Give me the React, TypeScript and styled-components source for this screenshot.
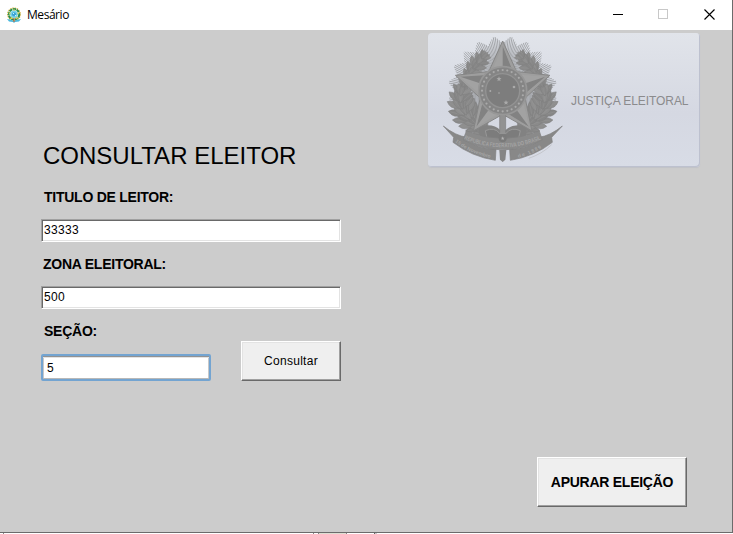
import React from "react";
import styled, { createGlobalStyle, css } from "styled-components";

const GlobalStyle = createGlobalStyle`
  * { box-sizing: border-box; }
  html, body { margin: 0; padding: 0; background: #fff; overflow: hidden; }
  body, input, button { font-family: "Liberation Sans", Arial, sans-serif; color: #000; }
`;

const Desktop = styled.div`
  width: 733px;
  height: 534px;
  background: #fff;
`;

const Window = styled.main`
  width: 733px;
  height: 533px;
  display: flex;
  flex-direction: column;
  border-right: 1px solid #6b6b6b;
  border-bottom: 1px solid #6b6b6b;
  background: #ccc;
`;

const TitleBar = styled.header`
  height: 30px;
  flex: none;
  display: flex;
  align-items: center;
  padding: 0 1px 0 6px;
  background: #fff;
`;

const WindowTitle = styled.h1`
  margin: 0 auto 0 5px;
  font: 400 12px/16px "Open Sans", "Noto Sans", sans-serif;
  letter-spacing: -0.45px;
`;

const WindowControl = styled.button<{ $disabled?: boolean }>`
  width: 45px;
  height: 30px;
  padding: 0 0 2px;
  border: 0;
  background: none;
  display: flex;
  align-items: center;
  justify-content: center;
  color: ${(p) => (p.$disabled ? "#c8c8c8" : "#000")};

  &:last-child { padding-left: 2px; }
`;

const Content = styled.div`
  flex: 1;
  display: flex;
  justify-content: space-between;
`;

const Form = styled.form`
  width: 341px;
  padding: 112px 0 0 41px;
  display: flex;
  flex-direction: column;
`;

const Heading = styled.h2`
  margin: 0 0 18px 2px;
  font-size: 24px;
  line-height: 28px;
  font-weight: 400;
  white-space: nowrap;
`;

const Label = styled.label<{ $indent: number }>`
  display: block;
  height: 18px;
  margin: 0 0 13px ${(p) => p.$indent}px;
  font-size: 14px;
  line-height: 18px;
  font-weight: 700;
  letter-spacing: -0.25px;
  white-space: nowrap;
`;

const Field = styled.input<{ $focused?: boolean }>`
  display: block;
  width: 300px;
  height: 23px;
  margin: 0 0 13px;
  padding: 0 2px 1px;
  border: 1px solid;
  border-color: #a0a0a0 #fff #fff #a0a0a0;
  outline: none;
  border-radius: 0;
  font-size: 12px;
  letter-spacing: 0.3px;
  background: #fff;
  box-shadow: inset 1px 1px 0 #696969, inset -1px -1px 0 #e3e3e3;
  ${(p) =>
    p.$focused &&
    css`
      width: 170px;
      height: 27px;
      margin: 0;
      padding: 0 4px;
      border: 2px solid #73a4d1;
      border-radius: 2px;
      box-shadow: inset 0 1px 0 #929292, inset 0 2px 0 #e3e3e3, inset 0 -1px 0 #b8b8b8,
        inset -1px 0 0 #c8c8c8, inset 1px 0 0 #c8c8c8;
    `}
`;

const SectionRow = styled.div`
  display: flex;
  justify-content: space-between;
  align-items: flex-end;
  height: 40px;
  margin-top: -12px;
`;

const RaisedButton = styled.button<{ $large?: boolean }>`
  width: ${(p) => (p.$large ? 150 : 100)}px;
  height: ${(p) => (p.$large ? 50 : 40)}px;
  padding: 0;
  border: 1px solid;
  border-color: #fff #696969 #696969 #fff;
  border-radius: 0;
  background: #efefef;
  box-shadow: inset -1px -1px 0 #a0a0a0, inset 1px 1px 0 #e3e3e3;
  font-size: ${(p) => (p.$large ? 14 : 12)}px;
  font-weight: ${(p) => (p.$large ? 700 : 400)};
  letter-spacing: ${(p) => (p.$large ? -0.26 : 0.3)}px;
  white-space: nowrap;
`;

const SideColumn = styled.aside`
  width: 305px;
  padding: 3px 33px 25px 0;
  display: flex;
  flex-direction: column;
  align-items: flex-end;
  justify-content: space-between;
`;

const JusticeCard = styled.section`
  width: 272px;
  height: 134px;
  margin-right: -1px;
  display: flex;
  align-items: center;
  padding-left: 13px;
  border-radius: 4px;
  background: linear-gradient(#e1e4ea, #d5d8e2 60%, #d8dce6);
  box-shadow: inset -1px -1px 0 #bdc1cf, 0 1px 1px #c0c2c8;
`;

const CardCaption = styled.span`
  margin: 2px 0 0 6px;
  color: #8b8b8d;
  font-size: 12px;
  line-height: 14px;
  letter-spacing: -0.06px;
  white-space: nowrap;
`;

const ActionSlot = styled.div`
  margin-right: 12px;
`;

const UnderWindow = styled.div`
  height: 1px;
  background: linear-gradient(
    to right,
    #fff 3px, #888 3px 4px, #fff 4px 313px, #888 313px 314px, #fff 314px 318px,
    #888 318px 319px, #dedfd3 319px 346px, #888 346px 347px, #fff 347px 374px,
    #666 374px 375px, #ccc 375px 377px, #fff 377px
  );
`;

const CX = 233;
const CY = 188;

const polar = (angle: number, radius: number): [number, number] => [
  CX + Math.cos(angle) * radius,
  CY + Math.sin(angle) * radius,
];

const starPoints = (cx: number, cy: number, outer: number, inner: number) =>
  Array.from({ length: 10 }, (_, i) => {
    const a = -Math.PI / 2 + (i * Math.PI) / 5;
    const r = i % 2 ? inner : outer;
    return `${(cx + Math.cos(a) * r).toFixed(1)},${(cy + Math.sin(a) * r).toFixed(1)}`;
  }).join(" ");

const rays = Array.from({ length: 180 }, (_, i) => {
  const a = (i * Math.PI * 2) / 180;
  const phase = Math.abs(((i + 4) % 9) - 4) / 4.5;
  return { a, r: 141 + phase * 24 };
}).filter(({ a }) => !(a > 0.75 && a < 2.39));

/* Left branch of the wreath: spine position, leaf length and half-spread. */
const spine: [number, number, number, number][] = [
  [172, 300, 24, 16],
  [156, 289, 25, 20],
  [141, 276, 26, 24],
  [127, 261, 26, 27],
  [116, 244, 26, 26],
  [109, 226, 25, 23],
  [107, 207, 24, 19],
  [110, 188, 22, 14],
  [118, 165, 19, 9],
  [130, 142, 19, 9],
  [142, 126, 21, 13],
  [154, 111, 22, 14],
  [166, 97, 20, 12],
  [178, 84, 17, 7],
];

const leaves = spine.flatMap(([x, y, length, spread], i) => {
  const [nx, ny] = spine[Math.min(i + 1, spine.length - 1)];
  const [px, py] = spine[Math.max(i - 1, 0)];
  const dir = Math.atan2(ny - py, nx - px);
  return [-1, -0.5, 0.5, 1, 0].map((k) => ({
    x: x - Math.sin(dir) * k * spread,
    y: y + Math.cos(dir) * k * spread,
    rot: (dir * 180) / Math.PI + 90 + k * 48,
    length,
    tone: ["#868686", "#8e8e8e", "#8a8a8a"][(i + Math.round(k * 2) + 4) % 3],
  }));
});

const facets = Array.from({ length: 5 }, (_, i) => {
  const tip = -Math.PI / 2 + (i * Math.PI * 2) / 5;
  const [tx, ty] = polar(tip, 134);
  const [rx, ry] = polar(tip + Math.PI / 5, 59);
  return `M${CX} ${CY}L${tx} ${ty}L${rx} ${ry}Z`;
});

const Branch = () => (
  <>
    <polyline
      points={spine.map(([x, y]) => `${x},${y}`).join(" ")}
      fill="none"
      stroke="#888"
      strokeWidth="26"
      strokeLinejoin="round"
    />
    {leaves.map((l, i) => (
      <g key={i} transform={`translate(${l.x} ${l.y}) rotate(${l.rot}) scale(${l.length / 20})`}>
        <path d="M0-18Q14-3 0 15Q-14-3 0-18Z" fill={l.tone} stroke="#808080" strokeWidth="1.3" />
        <path d="M0-13V12" stroke="#969696" strokeWidth="1" />
      </g>
    ))}
  </>
);

const Crest = () => (
  <svg width="124" height="128" viewBox="48 24 372 384" aria-label="Brasão da República">
    <g stroke="#9a9ca0" strokeWidth="2.6">
      {rays.map(({ a, r }, i) => {
        const [x1, y1] = polar(a, 70);
        const [x2, y2] = polar(a, r);
        return <line key={i} x1={x1} y1={y1} x2={x2} y2={y2} />;
      })}
    </g>
    <Branch />
    <g transform="translate(466 0) scale(-1 1)"><Branch /></g>
    <path d="M160 296Q205 284 226 307H241Q262 284 306 296L300 345H166Z" fill="#828282" />
    <polygon points={starPoints(CX, CY, 149, 71)} fill="#9e9e9e" stroke="#868686" strokeWidth="3" strokeLinejoin="round" />
    <polygon points={starPoints(CX, CY, 136, 61)} fill="#a2a2a2" />
    <g fill="#828282">{facets.map((d) => <path key={d} d={d} />)}</g>
    <path d="M224 245h18v85h-18Z" fill="#929292" stroke="#7e7e7e" strokeWidth="2" />
    <path d="M181 308Q208 296 224 316H243Q259 296 286 308L280 334H187Z" fill="#7c7c7c" stroke="#989898" strokeWidth="3" />
    <circle cx={CX} cy={CY} r="72" fill="#858585" stroke="#979797" strokeWidth="5" />
    <circle cx={CX} cy={CY} r="51" fill="#7d7d7d" stroke="#939393" strokeWidth="4" />
    <g fill="#aaa">
      {Array.from({ length: 28 }, (_, i) => {
        const [x, y] = polar((i * Math.PI * 2) / 28, 62);
        return <circle key={i} cx={x} cy={y} r="3.3" />;
      })}
      <polygon points={starPoints(222, 153, 8, 3.5)} />
      <polygon points={starPoints(243, 224, 8, 3.5)} />
      <circle cx="267" cy="177" r="4" />
      <circle cx="196" cy="189" r="3" />
      <circle cx="222" cy="195" r="2.5" />
    </g>
    <path d="M55 294Q91 323 126 328L119 335Q160 362 213 364L211 397Q140 386 84 343L86 328Z" fill="#888" stroke="#7f7f7f" strokeWidth="2" />
    <path d="M412 294Q376 323 342 328L348 335Q306 362 254 364L256 397Q327 386 382 343L380 328Z" fill="#888" stroke="#7f7f7f" strokeWidth="2" />
    <path d="M124 309Q233 354 343 309L352 336Q233 395 114 336Z" fill="#8a8a8a" stroke="#828282" strokeWidth="2" />
    <path d="M223 366h21l-3 29-8 7-8-7Z" fill="#858585" />
    <circle cx="233" cy="331" r="12" fill="#7a7a7a" />
    <polygon points={starPoints(233, 331, 6, 2.5)} fill="#b5b5b5" />
    <defs>
      <path id="motto" d="M117 333Q233 383 350 333" />
      <path id="date-left" d="M90 341Q137 380 208 392" />
      <path id="date-right" d="M280 389Q323 379 362 352" />
    </defs>
    <g fill="#a4a4a4" fontFamily="Liberation Sans, sans-serif" fontWeight="700">
      <text fontSize="18"><textPath href="#motto" textLength="238" lengthAdjust="spacingAndGlyphs">REPUBLICA FEDERATIVA DO BRASIL</textPath></text>
      <text fontSize="15"><textPath href="#date-left" textLength="118" lengthAdjust="spacingAndGlyphs">15 de Novembro</textPath></text>
      <text fontSize="15"><textPath href="#date-right" textLength="76">de 1889</textPath></text>
    </g>
    <path d="M311 391Q351 378 380 350" stroke="#b0b0b2" strokeWidth="1.5" fill="none" />
  </svg>
);

const AppIcon = () => (
  <svg width="16" height="16" viewBox="0 0 16 16" aria-hidden="true">
    <circle cx="8" cy="7.3" r="6.1" fill="none" stroke="#d9af36" strokeWidth="1.6" strokeDasharray="1.4 .8" />
    <circle cx="8" cy="7.3" r="5.2" fill="none" stroke="#218d53" strokeWidth="2" strokeDasharray="3.2 .6" />
    <polygon points="8,1.3 9.7,5.2 14,5.7 10.8,8.5 11.8,12.7 8,10.5 4.2,12.7 5.2,8.5 2,5.7 6.3,5.2" fill="#e2ce4a" />
    <circle cx="8" cy="7.3" r="3.7" fill="#78d2ec" />
    <circle cx="8" cy="7.3" r="2.1" fill="#3ba5d3" />
    <path d="M7 6h1v1H7Zm2 2h1v1H9Z" fill="#c8f3ff" />
    <path d="M1 12l4 .7L8 14l3-1.3 4-.7-2 2.5-4 .5-1 1-1-1-4-.5Z" fill="#49b9de" />
    <path d="M7.5 11h1v4h-1Z" fill="#d35b2b" />
  </svg>
);

export default function App() {
  return (
    <>
      <GlobalStyle />
      <Desktop>
        <Window>
          <TitleBar>
            <AppIcon />
            <WindowTitle>Mesário</WindowTitle>
            <WindowControl aria-label="Minimizar">
              <svg width="11" height="11" shapeRendering="crispEdges"><path d="M0 5.5h10" stroke="currentColor" /></svg>
            </WindowControl>
            <WindowControl aria-label="Maximizar" $disabled>
              <svg width="11" height="10" shapeRendering="crispEdges"><path d="M.5.5h9v9h-9Z" fill="none" stroke="currentColor" /></svg>
            </WindowControl>
            <WindowControl aria-label="Fechar">
              <svg width="11" height="11"><path d="m.5.5 10 10m0-10-10 10" stroke="currentColor" strokeWidth="1.15" /></svg>
            </WindowControl>
          </TitleBar>
          <Content>
            <Form onSubmit={(e) => e.preventDefault()}>
              <Heading>CONSULTAR ELEITOR</Heading>
              <Label htmlFor="titulo" $indent={3}>TITULO DE LEITOR:</Label>
              <Field id="titulo" defaultValue="33333" />
              <Label htmlFor="zona" $indent={2}>ZONA ELEITORAL:</Label>
              <Field id="zona" defaultValue="500" />
              <Label htmlFor="secao" $indent={3}>SEÇÃO:</Label>
              <SectionRow>
                <Field id="secao" defaultValue="5" $focused />
                <RaisedButton type="submit">Consultar</RaisedButton>
              </SectionRow>
            </Form>
            <SideColumn>
              <JusticeCard>
                <Crest />
                <CardCaption>JUSTIÇA ELEITORAL</CardCaption>
              </JusticeCard>
              <ActionSlot>
                <RaisedButton type="button" $large>APURAR ELEIÇÃO</RaisedButton>
              </ActionSlot>
            </SideColumn>
          </Content>
        </Window>
        <UnderWindow />
      </Desktop>
    </>
  );
}
